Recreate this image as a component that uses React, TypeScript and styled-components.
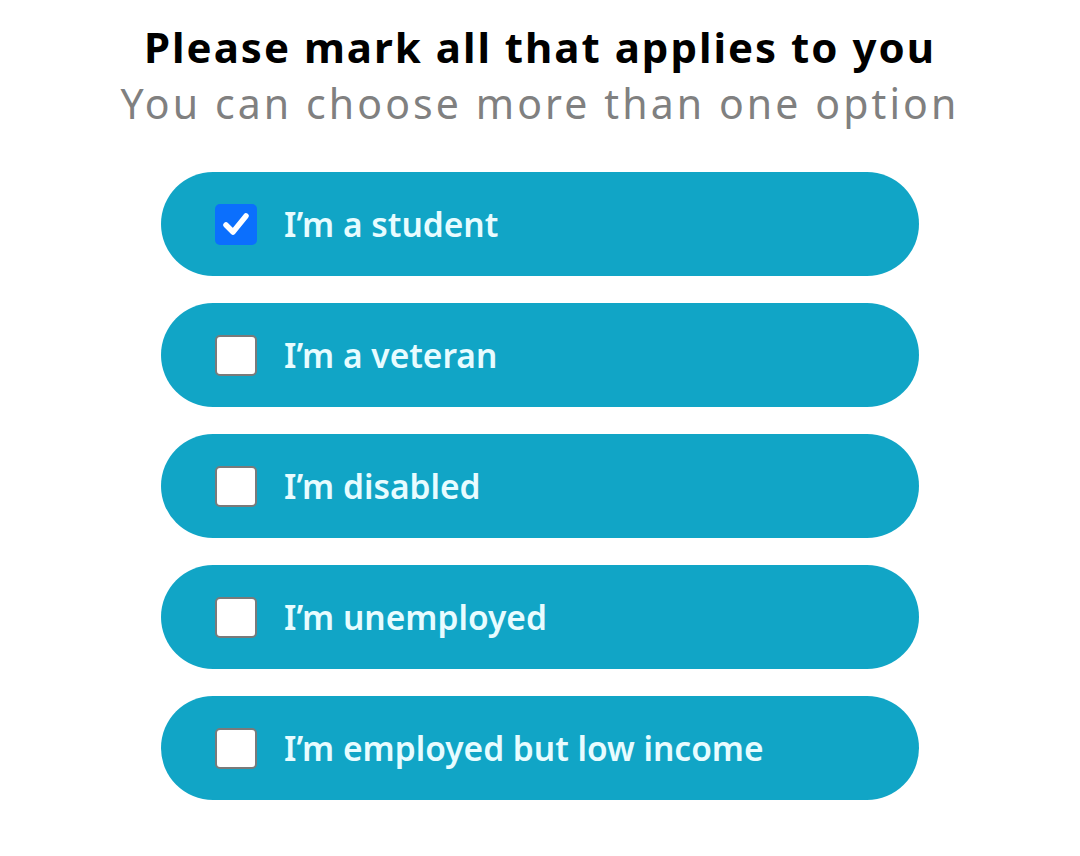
import React, { useState } from "react";
import styled, { createGlobalStyle } from "styled-components";

const Global = createGlobalStyle`
  html, body { margin: 0; padding: 0; background: #ffffff; }
  body { font-family: "Noto Sans", "DejaVu Sans", sans-serif; }
`;

const Page = styled.div`
  width: 1080px;
  display: flex;
  flex-direction: column;
  align-items: center;
  padding-top: 20px;
`;

const Title = styled.h1`
  margin: 0;
  font-size: 42px;
  line-height: 54px;
  font-weight: 700;
  letter-spacing: 2px;
  color: #000000;
  text-align: center;
`;

const Subtitle = styled.p`
  margin: 2px 0 0;
  font-size: 41px;
  line-height: 54px;
  font-weight: 400;
  letter-spacing: 3.1px;
  color: #808080;
  text-align: center;
`;

const List = styled.div`
  margin-top: 42px;
  display: flex;
  flex-direction: column;
  gap: 27px;
  width: 758px;
`;

const Option = styled.label`
  height: 104px;
  border-radius: 52px;
  background: #11a5c6;
  display: flex;
  align-items: center;
  padding-left: 54px;
  gap: 27px;
  cursor: pointer;
`;

const Box = styled.span<{ $checked: boolean }>`
  width: 42px;
  height: 41px;
  box-sizing: border-box;
  border-radius: 5px;
  display: flex;
  align-items: center;
  justify-content: center;
  background: ${(p) => (p.$checked ? "#0b6ffd" : "#ffffff")};
  border: ${(p) => (p.$checked ? "none" : "2.5px solid #7a7a7a")};
`;

const Label = styled.span`
  font-size: 33.5px;
  font-weight: 600;
  color: #e8fcff;
`;

const options = [
  "I’m a student",
  "I’m a veteran",
  "I’m disabled",
  "I’m unemployed",
  "I’m employed but low income",
];

export default function App() {
  const [checked, setChecked] = useState<boolean[]>([true, false, false, false, false]);
  return (
    <Page>
      <Global />
      <Title>Please mark all that applies to you</Title>
      <Subtitle>You can choose more than one option</Subtitle>
      <List>
        {options.map((o, i) => (
          <Option
            key={o}
            onClick={() => setChecked((c) => c.map((v, j) => (j === i ? !v : v)))}
          >
            <Box $checked={checked[i]}>
              {checked[i] && (
                <svg width="28" height="26" viewBox="0 0 28 26">
                  <path
                    d="M4 14 L11 21 L24 5"
                    fill="none"
                    stroke="#ffffff"
                    strokeWidth="5.5"
                    strokeLinecap="round"
                    strokeLinejoin="round"
                  />
                </svg>
              )}
            </Box>
            <Label>{o}</Label>
          </Option>
        ))}
      </List>
    </Page>
  );
}
